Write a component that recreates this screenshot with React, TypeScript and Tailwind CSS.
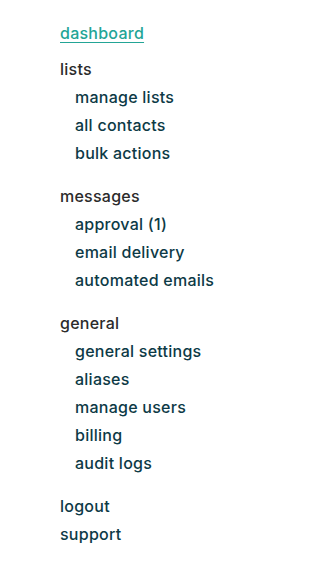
import React from "react";

const groups = [
  { title: "lists", items: ["manage lists", "all contacts", "bulk actions"] },
  { title: "messages", items: ["approval (1)", "email delivery", "automated emails"] },
  {
    title: "general",
    items: ["general settings", "aliases", "manage users", "billing", "audit logs"],
  },
];

export default function App() {
  return (
    <div
      className="min-h-[583px] w-[274px] bg-white pl-[60px] pt-[19px] text-[16px] font-medium leading-[28px] tracking-[0.25px]"
      style={{ fontFamily: "Inter, 'Noto Sans', sans-serif" }}
    >
      <nav className="flex flex-col">
        <a href="#" className="mb-[8px] self-start text-[#23a596] underline underline-offset-[3px]">
          dashboard
        </a>

        {groups.map((g) => (
          <div key={g.title} className="mb-[15px] flex flex-col">
            <span className="text-[#2b2b2b]">{g.title}</span>
            <ul className="flex flex-col pl-[15px]">
              {g.items.map((item) => (
                <li key={item}>
                  <a href="#" className="text-[#0d3a46]">
                    {item}
                  </a>
                </li>
              ))}
            </ul>
          </div>
        ))}

        <a href="#" className="text-[#0d3a46]">logout</a>
        <a href="#" className="text-[#0d3a46]">support</a>
      </nav>
    </div>
  );
}
